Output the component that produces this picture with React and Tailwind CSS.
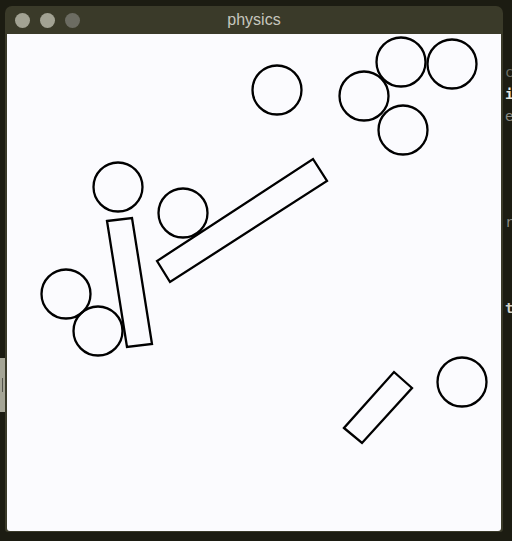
import React from "react";

// shapes, in page coordinates (the svg viewBox is offset to match)
const circles = [
  [277, 90], [401, 62], [452, 64], [364, 96], [403, 130],
  [118, 187], [183, 213], [66, 294], [98, 331], [462, 382],
];

const boxes = [
  "107,221 132,218 152,344 127,347",
  "157,261 170,282 327,181 313,159",
  "344,428 362,443 412,388 394,372",
];

// bits of the terminal behind the window
const termBits = [
  { ch: "c", top: 64, cls: "text-[#6f6f66]" },
  { ch: "i", top: 86, cls: "text-[#e6e6de] font-bold" },
  { ch: "e", top: 108, cls: "text-[#8c8c84]" },
  { ch: "r", top: 214, cls: "text-[#8c8c84]" },
  { ch: "t", top: 300, cls: "text-[#d0d0c8] font-bold" },
];

const App = () => {
  return (
    <div className="relative w-[512px] h-[541px] overflow-hidden bg-[#1c1c12] font-['Liberation_Sans',sans-serif]">
      {/* terminal text peeking on the right */}
      {termBits.map((b) => (
        <span
          key={b.top}
          className={`absolute left-[505px] text-[14px] leading-[16px] font-['DejaVu_Sans_Mono',monospace] ${b.cls}`}
          style={{ top: b.top }}
        >
          {b.ch}
        </span>
      ))}

      {/* scrollbar stub on the left */}
      <div className="absolute left-0 top-[358px] w-[5px] h-[54px] bg-[#a5a596] flex justify-center pt-[20px]">
        <div className="w-px h-[14px] bg-[#55554c]" />
      </div>

      {/* window */}
      <div className="absolute left-[5px] top-[6px] w-[498px] h-[526px] rounded-t-[7px] rounded-b-[3px] bg-[#3a3a29] flex flex-col overflow-hidden">
        <div className="h-[28px] relative flex items-center px-[10px] gap-[10px] shrink-0">
          <div className="w-[15px] h-[15px] rounded-full bg-[#a2a293]" />
          <div className="w-[15px] h-[15px] rounded-full bg-[#a2a293]" />
          <div className="w-[15px] h-[15px] rounded-full bg-[#6c6c62]" />
          <div className="absolute inset-0 flex items-center justify-center text-[16px] text-[#c6c6be]">
            physics
          </div>
        </div>
        <div className="flex-1 mx-[2px] mb-[1px] bg-[#fbfbfe] rounded-b-[3px]">
          <svg width="494" height="496" viewBox="7 34 494 496">
            {circles.map(([cx, cy]) => (
              <circle
                key={`${cx}-${cy}`}
                cx={cx}
                cy={cy}
                r="24.5"
                fill="none"
                stroke="#000"
                strokeWidth="2.3"
              />
            ))}
            {boxes.map((pts) => (
              <polygon
                key={pts}
                points={pts}
                fill="none"
                stroke="#000"
                strokeWidth="2.3"
                strokeLinejoin="miter"
              />
            ))}
          </svg>
        </div>
      </div>
    </div>
  );
};

export default App;
